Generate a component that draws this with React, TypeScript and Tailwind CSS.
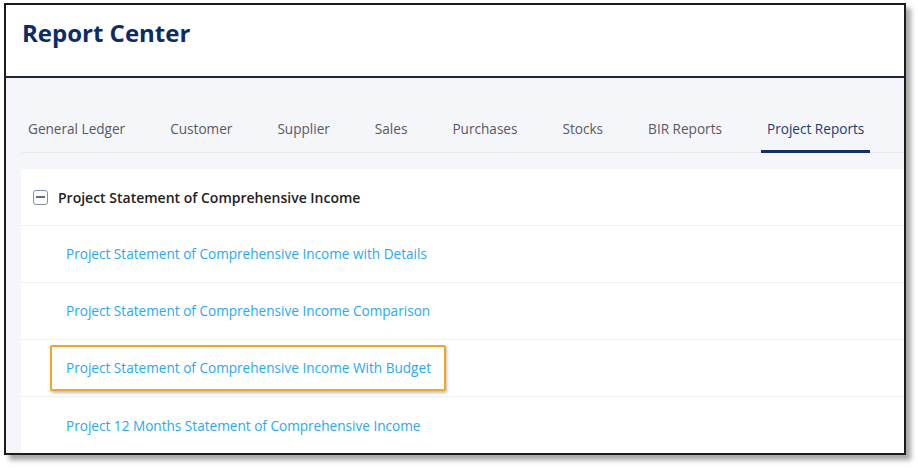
const tabs = [
  "General Ledger",
  "Customer",
  "Supplier",
  "Sales",
  "Purchases",
  "Stocks",
  "BIR Reports",
  "Project Reports",
];

const reports = [
  "Project Statement of Comprehensive Income with Details",
  "Project Statement of Comprehensive Income Comparison",
  "Project Statement of Comprehensive Income With Budget",
  "Project 12 Months Statement of Comprehensive Income",
];

function MinusBox() {
  return (
    <span className="flex h-[15px] w-[15px] items-center justify-center rounded-[3px] border border-[#7f8fae]">
      <span className="h-[1.5px] w-[9px] bg-[#5d6e8f]" />
    </span>
  );
}

export default function App() {
  const active = "Project Reports";
  const highlighted = "Project Statement of Comprehensive Income With Budget";

  return (
    <div className="min-h-screen bg-white pl-[4px] pt-[3px] font-['Open_Sans',sans-serif]">
      <div className="flex h-[452px] w-[902px] flex-col overflow-hidden border-2 border-[#1c1c1c] bg-[#f5f6fa] shadow-[5px_5px_5px_rgba(0,0,0,0.35)]">
        <header className="h-[73px] shrink-0 border-b-2 border-[#1d2737] bg-white pl-[16px] pt-[11px]">
          <h1 className="text-[24px] font-bold leading-[34px] text-[#0c2c66]">Report Center</h1>
        </header>

        <div className="flex flex-1 flex-col pl-[15px] pt-[26px]">
          <nav className="ml-[1px] flex gap-[33px] border-b border-[#e9eaee]">
            {tabs.map((tab) => (
              <div
                key={tab}
                className={`-mb-px flex h-[49px] items-center px-[6px] pt-[2px] text-[13.6px] ${
                  tab === active
                    ? "border-b-[3px] border-[#12306b] pt-[5px] text-[#1c3b78]"
                    : "text-[#555a62]"
                }`}
              >
                {tab}
              </div>
            ))}
          </nav>

          <div className="mt-[16px] flex-1 bg-white">
            <div className="flex h-[57px] items-center gap-[10px] border-b border-[#efefef] pl-[12px]">
              <MinusBox />
              <span className="text-[14px] font-semibold text-[#222]">
                Project Statement of Comprehensive Income
              </span>
            </div>
            {reports.map((r) => (
              <div key={r} className="flex h-[57px] items-center border-b border-[#efefef] pl-[29px] last:border-b-0">
                <a
                  href="#"
                  className={`border-2 px-[14px] py-[11px] text-[13.6px] leading-[20px] text-[#2aa8f2] ${
                    r === highlighted
                      ? "rounded-[2px] border-[#f2a526] pr-[13px] shadow-[1px_2px_3px_rgba(0,0,0,0.25)]"
                      : "border-transparent"
                  }`}
                >
                  {r}
                </a>
              </div>
            ))}
          </div>
        </div>
      </div>
    </div>
  );
}
